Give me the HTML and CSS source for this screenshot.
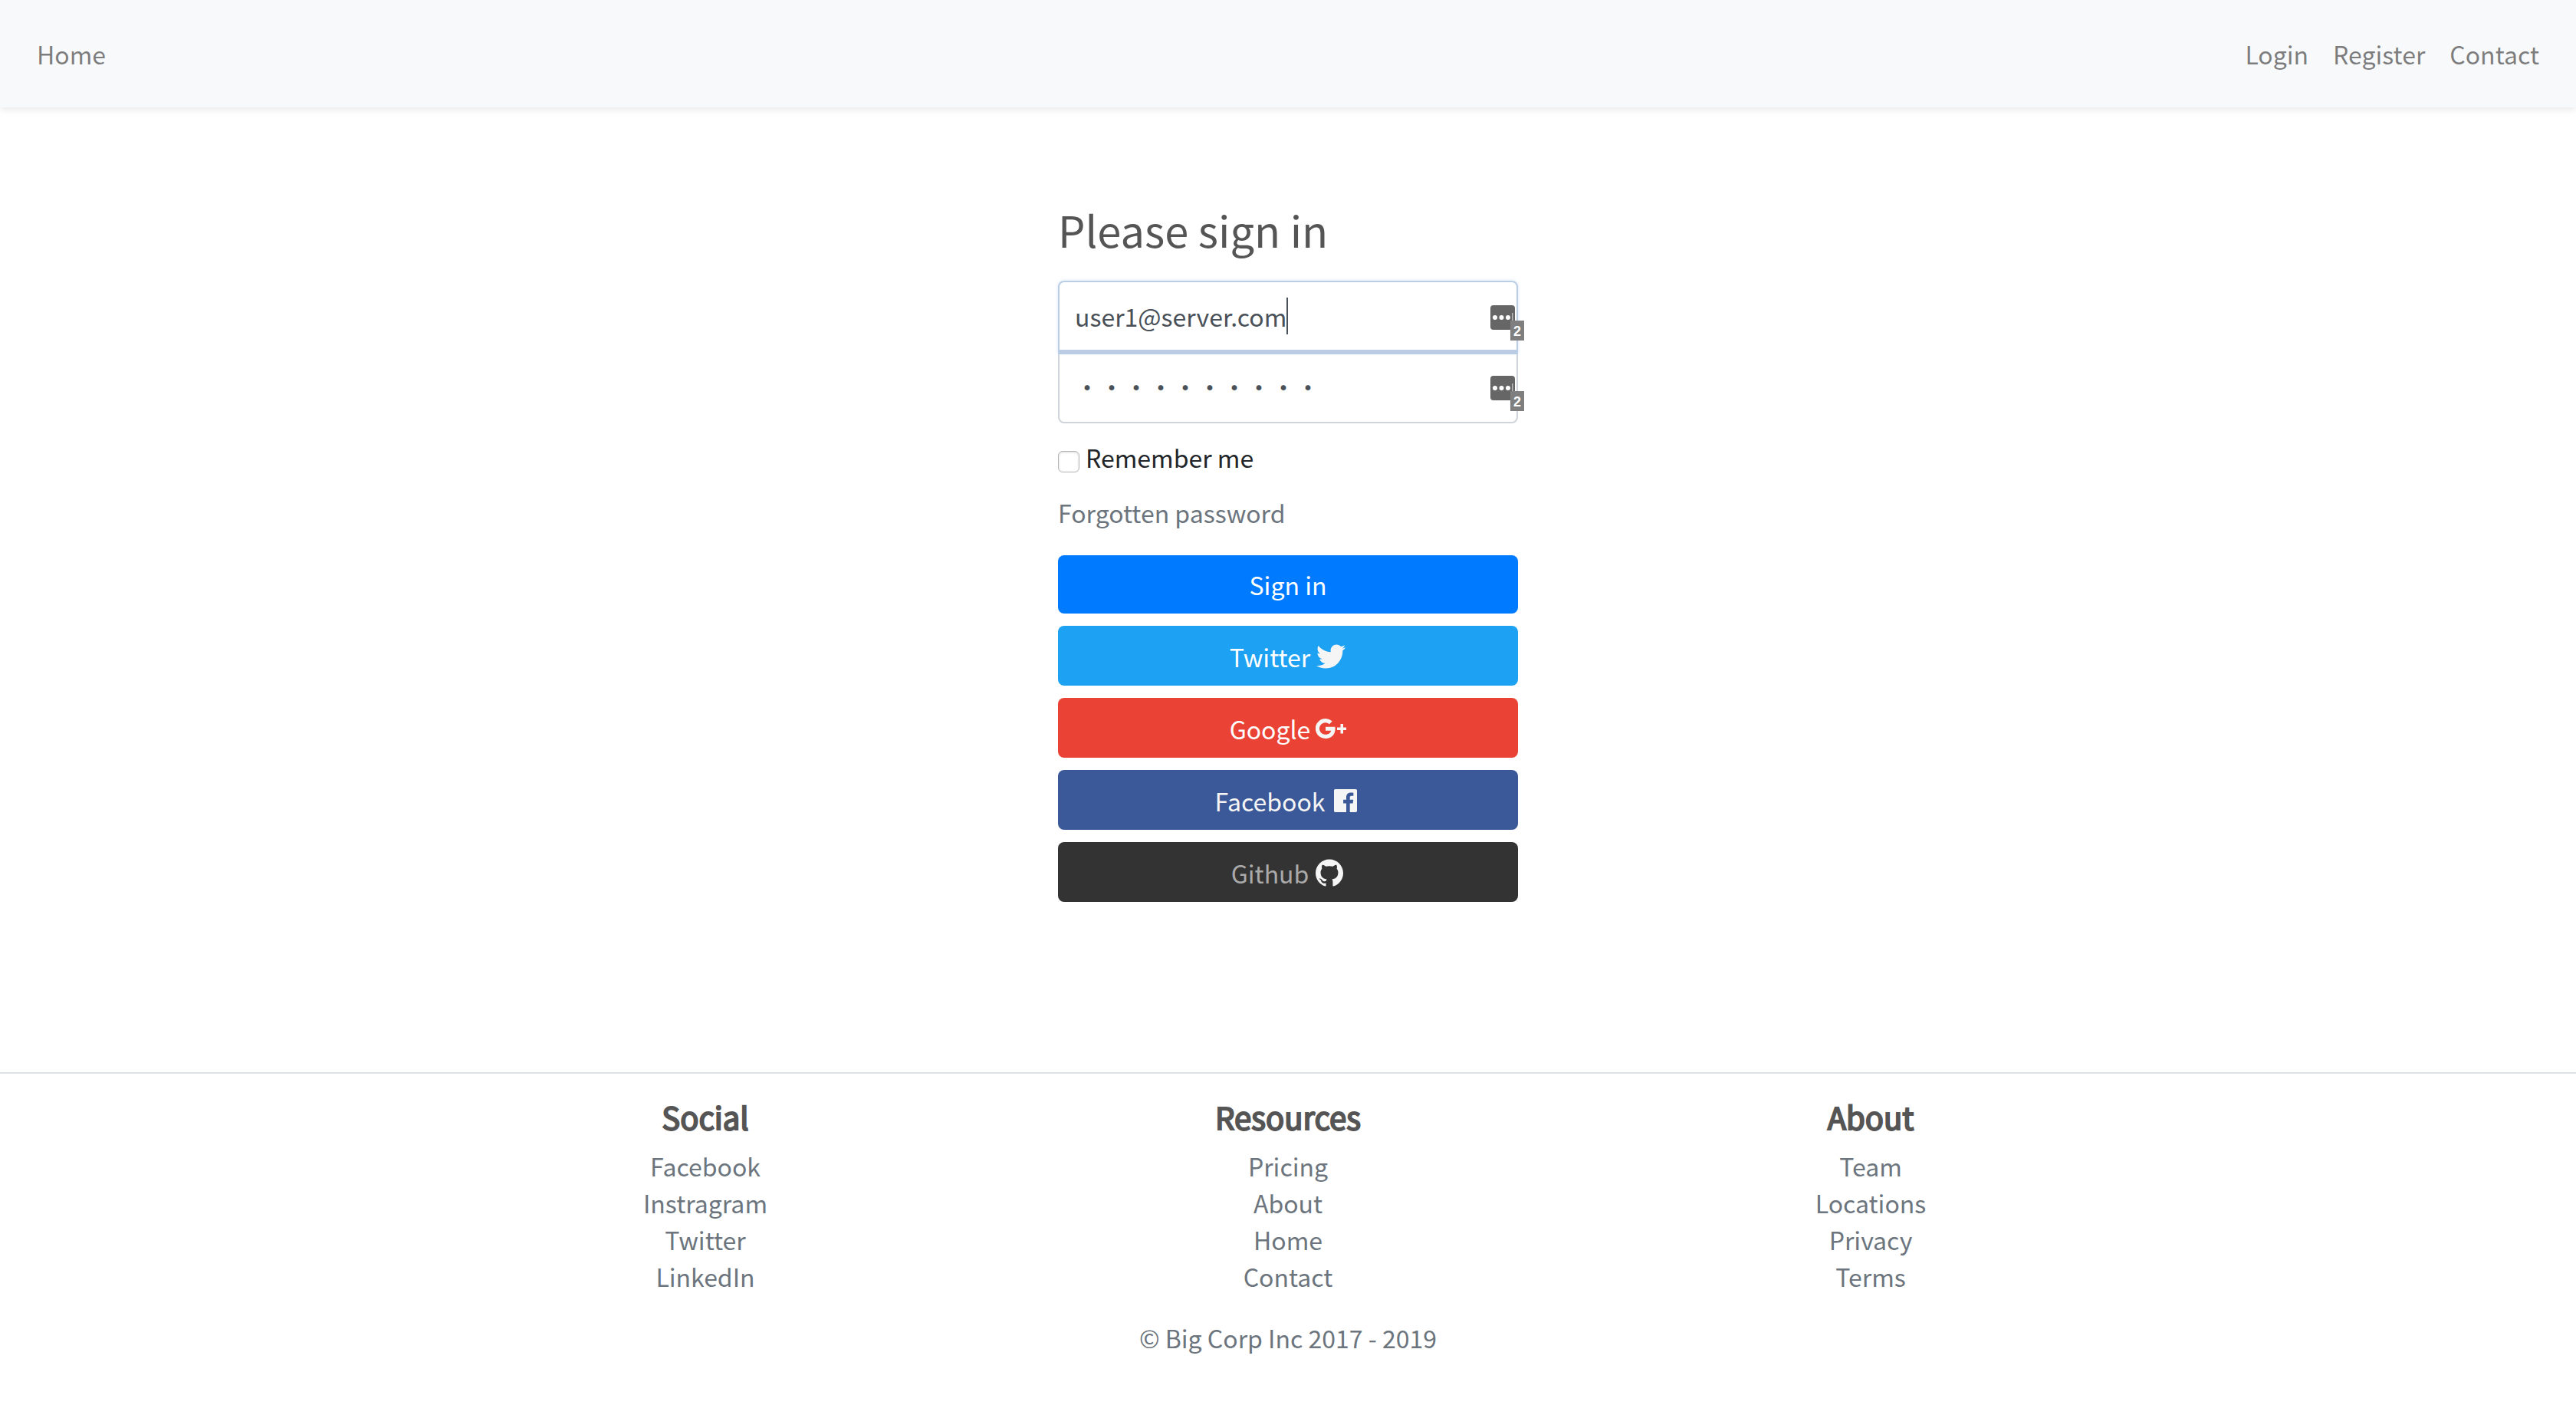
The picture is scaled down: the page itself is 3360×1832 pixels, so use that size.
FILE: index.html
```html
<!DOCTYPE html>
<html lang="en">
<head>
  <meta charset="utf-8">
  <meta name="viewport" content="width=device-width, initial-scale=1">
  <title>Please sign in</title>
  <link rel="stylesheet" href="styles.css">
</head>
<body>
  <header class="navbar">
    <a class="nav-link" href="#">Home</a>
    <nav class="nav-group" aria-label="Account">
      <a class="nav-link" href="#">Login</a>
      <a class="nav-link" href="#">Register</a>
      <a class="nav-link" href="#">Contact</a>
    </nav>
  </header>

  <main class="main">
    <form class="signin">
      <h1 class="signin-title">Please sign in</h1>

      <div class="field">
        <input class="input input-email" type="email" value="user1@server.com" aria-label="Email address">
        <span class="caret"></span>
        <span class="vault" aria-hidden="true">
          <svg class="vault-icon" viewBox="0 0 32 32"><rect width="32" height="32" rx="4" fill="#666"/><g fill="#fff"><circle cx="6" cy="16" r="3"/><circle cx="14.500" cy="16" r="3"/><circle cx="23" cy="16" r="3"/><rect x="28" y="10" width="1.500" height="12" fill="#bbb"/></g></svg>
          <span class="vault-count">2</span>
        </span>
      </div>
      <div class="field">
        <input class="input input-password" type="password" value="password12" aria-label="Password">
        <span class="vault" aria-hidden="true">
          <svg class="vault-icon" viewBox="0 0 32 32"><rect width="32" height="32" rx="4" fill="#666"/><g fill="#fff"><circle cx="6" cy="16" r="3"/><circle cx="14.500" cy="16" r="3"/><circle cx="23" cy="16" r="3"/><rect x="28" y="10" width="1.500" height="12" fill="#bbb"/></g></svg>
          <span class="vault-count">2</span>
        </span>
      </div>

      <label class="remember"><input class="checkbox" type="checkbox"> Remember me</label>
      <a class="forgot" href="#">Forgotten password</a>

      <button class="btn btn-primary" type="submit">Sign in</button>
      <button class="btn btn-social btn-twitter" type="button">Twitter
        <svg class="btn-icon" viewBox="0 0 40 40" aria-hidden="true"><path transform="translate(1 1) scale(1.590)" d="M23.954 4.569c-.885.389-1.830.654-2.825.775 1.014-.611 1.794-1.574 2.163-2.723-.951.555-2.005.959-3.127 1.184-.896-.959-2.173-1.559-3.591-1.559-2.717 0-4.920 2.203-4.920 4.917 0 .390.045.765.127 1.124C7.691 8.094 4.066 6.130 1.640 3.161c-.427.722-.666 1.561-.666 2.475 0 1.710.870 3.213 2.188 4.096-.807-.026-1.566-.248-2.228-.616v.061c0 2.385 1.693 4.374 3.946 4.827-.413.111-.849.171-1.296.171-.314 0-.615-.030-.916-.086.631 1.953 2.445 3.377 4.604 3.417-1.680 1.319-3.809 2.105-6.102 2.105-.390 0-.779-.023-1.170-.067 2.189 1.394 4.768 2.209 7.557 2.209 9.054 0 13.999-7.496 13.999-13.986 0-.209 0-.420-.015-.630.961-.689 1.800-1.560 2.460-2.548l-.047-.020z"/></svg>
      </button>
      <button class="btn btn-social btn-google" type="button">Google
        <svg class="btn-icon" viewBox="0 0 40 40" aria-hidden="true"><path d="M13 17.700v5.100h7.200c-.7 2.700-3.100 5-7.200 5a7.800 7.800 0 1 1 5-13.600l3.700-3.700A13 13 0 1 0 13 33c7.500 0 12.600-5.200 12.600-12.800 0-.9-.1-1.700-.2-2.500z"/><path d="M32.500 14h3.500v4.500h4V22h-4v4.500h-3.500V22H28v-3.500h4.500z"/></svg>
      </button>
      <button class="btn btn-social btn-facebook" type="button">Facebook
        <svg class="btn-icon" viewBox="0 0 40 40" aria-hidden="true"><path transform="translate(5 5) scale(1.250)" d="M22.676 0H1.324C.593 0 0 .593 0 1.324v21.352C0 23.408.593 24 1.324 24h11.494v-9.294H9.689v-3.621h3.129V8.410c0-3.099 1.894-4.785 4.659-4.785 1.325 0 2.464.097 2.796.141v3.240h-1.921c-1.500 0-1.792.721-1.792 1.771v2.311h3.584l-.465 3.630H16.560V24h6.115c.733 0 1.325-.592 1.325-1.324V1.324C24 .593 23.408 0 22.676 0"/></svg>
      </button>
      <button class="btn btn-social btn-github" type="button">Github
        <svg class="btn-icon" viewBox="0 0 40 40" aria-hidden="true"><path transform="translate(2 2) scale(1.500)" d="M12 .297c-6.630 0-12 5.373-12 12 0 5.303 3.438 9.800 8.205 11.385.600.113.820-.258.820-.577 0-.285-.010-1.040-.015-2.040-3.338.724-4.042-1.610-4.042-1.610C4.422 18.070 3.633 17.700 3.633 17.700c-1.087-.744.084-.729.084-.729 1.205.084 1.838 1.236 1.838 1.236 1.070 1.835 2.809 1.305 3.495.998.108-.776.417-1.305.760-1.605-2.665-.300-5.466-1.332-5.466-5.930 0-1.310.465-2.380 1.235-3.220-.135-.303-.540-1.523.105-3.176 0 0 1.005-.322 3.300 1.230.960-.267 1.980-.399 3-.405 1.020.006 2.040.138 3 .405 2.280-1.552 3.285-1.230 3.285-1.230.645 1.653.240 2.873.120 3.176.765.840 1.230 1.910 1.230 3.220 0 4.610-2.805 5.625-5.475 5.920.420.360.810 1.096.810 2.220 0 1.606-.015 2.896-.015 3.286 0 .315.210.690.825.570C20.565 22.092 24 17.592 24 12.297c0-6.627-5.373-12-12-12"/></svg>
      </button>
    </form>
  </main>

  <footer class="footer">
    <div class="footer-columns">
      <section>
        <h2 class="footer-title">Social</h2>
        <ul class="footer-list">
          <li><a href="#">Facebook</a></li>
          <li><a href="#">Instragram</a></li>
          <li><a href="#">Twitter</a></li>
          <li><a href="#">LinkedIn</a></li>
        </ul>
      </section>
      <section>
        <h2 class="footer-title">Resources</h2>
        <ul class="footer-list">
          <li><a href="#">Pricing</a></li>
          <li><a href="#">About</a></li>
          <li><a href="#">Home</a></li>
          <li><a href="#">Contact</a></li>
        </ul>
      </section>
      <section>
        <h2 class="footer-title">About</h2>
        <ul class="footer-list">
          <li><a href="#">Team</a></li>
          <li><a href="#">Locations</a></li>
          <li><a href="#">Privacy</a></li>
          <li><a href="#">Terms</a></li>
        </ul>
      </section>
    </div>
    <p class="copyright">© Big Corp Inc 2017 - 2019</p>
  </footer>
</body>
</html>
```
FILE: styles.css
```css
*,
*::before,
*::after {
  box-sizing: border-box;
}

body {
  margin: 0;
  background: #fff;
  color: #212529;
  font-family: "Noto Sans CJK TC", "Noto Sans", sans-serif;
  font-size: 32px;
  line-height: 48px;
}

a {
  color: #6c757d;
  text-decoration: none;
}

input,
button {
  margin: 0;
  font: inherit;
}

/* Top bar */
.navbar {
  display: flex;
  justify-content: space-between;
  padding: 46px 48px;
  background: #f8f9fb;
  box-shadow: 0 4px 8px rgba(0, 0, 0, .075);
}

.nav-group {
  display: flex;
  gap: 32px;
}

.nav-link {
  color: rgba(0, 0, 0, .5);
}

/* Sign-in form */
.main {
  padding: 126px 32px 222px;
}

.signin {
  display: flex;
  flex-direction: column;
  max-width: 600px;
  margin: 0 auto;
}

.signin-title {
  margin: 0 0 34px;
  color: #555;
  font-size: 56px;
  font-weight: 400;
  line-height: 66px;
}

.field {
  position: relative;
}

.input {
  display: block;
  width: 100%;
  height: 94px;
  padding: 20px 20px 22px;
  border: 2px solid #ced4da;
  background: #fff;
  color: #495057;
  outline: 0;
}

.input-email {
  position: relative;
  z-index: 1;
  border-color: #bacde4;
  border-radius: 8px 8px 0 0;
  box-shadow: inset 0 -2px 0 #bacde4, 0 2px 0 #bacde4, 0 0 4px 1px #e6effb;
}

.input-password {
  margin-top: -2px;
  border-radius: 0 0 8px 8px;
}

.caret {
  position: absolute;
  z-index: 2;
  top: 22px;
  left: 298px;
  width: 2px;
  height: 48px;
  background: #495057;
}

.vault {
  position: absolute;
  z-index: 2;
  right: 4px;
  bottom: 30px;
  width: 32px;
  height: 32px;
}

.vault-icon {
  display: block;
  width: 32px;
  height: 32px;
}

.vault-count {
  position: absolute;
  top: 20px;
  left: 26px;
  width: 18px;
  height: 26px;
  background: #7f7f7f;
  color: #fff;
  font: bold 18px/28px "Liberation Sans", sans-serif;
  text-align: center;
}

.remember {
  display: flex;
  align-items: center;
  gap: 8px;
  margin: 20px 0 24px;
}

.checkbox {
  width: 28px;
  height: 28px;
  margin-top: 12px;
  border: 1px solid #b4b4b4;
  border-radius: 6px;
  background: #fff;
  box-shadow: inset 0 1px 3px rgba(0, 0, 0, .15);
  appearance: none;
}

.forgot {
  align-self: flex-start;
  margin-bottom: 32px;
}

.btn {
  display: flex;
  align-items: center;
  justify-content: center;
  gap: 7px;
  height: 76px;
  padding: 0 24px;
  border: 0;
  border-radius: 8px;
  color: #fff;
}

.btn-social {
  height: 78px;
  margin-top: 16px;
  padding-top: 2px;
}

.btn-icon {
  width: 40px;
  height: 40px;
  fill: #f5f5f5;
}

.btn-primary {
  background: #007bff;
}

.btn-twitter {
  background: #1da1f2;
}

.btn-google {
  background: #ea4335;
}

.btn-facebook {
  background: #3b5998;
  color: #f5f5f5;
}

.btn-github {
  background: #333;
  color: #aaa;
}

/* Footer */
.footer {
  padding: 32px 0 64px;
  border-top: 2px solid #dee2e6;
  text-align: center;
}

.footer-columns {
  display: grid;
  grid-template-columns: repeat(3, 1fr);
  max-width: 2280px;
  margin: 0 auto;
}

.footer-title {
  margin: 0 0 16px;
  color: #555;
  font-size: 40px;
  font-weight: 400;
  line-height: 48px;
  -webkit-text-stroke: 2px #555;
}

.footer-list {
  margin: 0;
  padding: 0;
  list-style: none;
}

.copyright {
  margin: 32px 0 0;
  color: #6c757d;
}
```
